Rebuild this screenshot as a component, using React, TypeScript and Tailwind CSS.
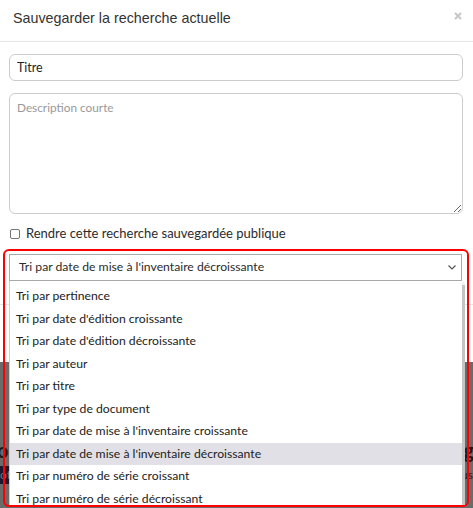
const sortOptions = [
  'Tri par pertinence',
  "Tri par date d'édition croissante",
  "Tri par date d'édition décroissante",
  'Tri par auteur',
  'Tri par titre',
  'Tri par type de document',
  "Tri par date de mise à l'inventaire croissante",
  "Tri par date de mise à l'inventaire décroissante",
  'Tri par numéro de série croissant',
  'Tri par numéro de série décroissant',
  'Tri par cote croissante',
]

const selected = "Tri par date de mise à l'inventaire décroissante"

export default function App() {
  return (
    <div className="relative h-[508px] w-[473px] overflow-hidden bg-[#6b6b6b] font-['Lato',sans-serif] text-[13px] text-[#2b2b2b]">
      {/* Modal */}
      <div className="h-[362px] bg-white">
        <div className="flex h-[42px] items-start justify-between border-b border-[#e5e5e5] pl-[13px] pr-[11px] pt-[8px]">
          <h4 className="font-['Liberation_Sans',Arial,sans-serif] text-[14.3px] leading-[20px] text-[#333]">
            Sauvegarder la recherche actuelle
          </h4>
          <svg width="8" height="8" viewBox="0 0 8 8" className="mt-[4px]">
            <path d="M1 1L7 7M7 1L1 7" stroke="#c6c6c6" strokeWidth="2" />
          </svg>
        </div>

        <div className="flex flex-col pl-[9px] pr-[10px] pt-[12px]">
          <input
            className="h-[27px] rounded-[6px] border border-[#ccc] px-[7px] text-[12.5px] text-[#222] outline-none"
            defaultValue="Titre"
          />
          <textarea
            className="mt-[12px] h-[121px] rounded-[6px] border border-[#ccc] px-[7px] py-[5px] text-[11.8px] text-[#333] outline-none placeholder:text-[#999]"
            placeholder="Description courte"
          />
          <label className="mt-[12px] flex h-[16px] items-center gap-[6px] pl-[1px]">
            <span className="h-[10px] w-[10px] rounded-[2px] border border-[#767676] bg-white" />
            <span className="text-[13px] text-[#2b2b2b]">Rendre cette recherche sauvegardée publique</span>
          </label>
          <div className="mt-[12px] mr-[1px] flex h-[27px] items-center justify-between border border-[#a9a9a9] bg-white pl-[9px] pr-[5px]">
            <span className="text-[12.2px]">{selected}</span>
            <svg width="8" height="5" viewBox="0 0 8 5">
              <path d="M0.5 0.5L4 4L7.5 0.5" stroke="#555" strokeWidth="1.2" fill="none" />
            </svg>
          </div>
        </div>

        {/* footer */}
        <div className="mt-[23px] h-[57px] border-t border-[#e5e5e5]" />
      </div>

      {/* page under overlay */}
      <div className="flex items-start justify-between pt-[78px] text-[20px] font-bold leading-[20px] text-[#1a1a1a]">
        <span className="-ml-[3px]">oc</span>
        <span className="-mr-[1px]">g</span>
      </div>
      <div className="mt-[6px] flex items-center justify-between text-[12px] leading-[18px]">
        <span className="bg-[#1c1830] pr-[1px] text-[#777]">ot</span>
        <span className="text-[#222]">us</span>
      </div>

      {/* focus highlight */}
      <div className="absolute left-[3px] top-[249px] h-[258px] w-[466px] rounded-[6px] border-2 border-[#ff0000]" />

      {/* open dropdown */}
      <div className="absolute left-[9px] top-[281px] h-[224px] w-[456px] overflow-hidden">
        <div className="flex h-full">
          <div className="w-[453px] border-l border-[#cfcfcf] bg-white pt-[4px] shadow-[0_2px_6px_rgba(0,0,0,0.25)]">
            {sortOptions.map((opt) => (
              <div
                key={opt}
                className={`flex h-[22.5px] items-center pl-[6px] text-[12.2px] text-[#222] ${
                  opt === selected ? 'bg-[#e1e0e6]' : ''
                }`}
              >
                {opt}
              </div>
            ))}
          </div>
          <div className="mt-[4px] w-[3px] bg-[#c4c4c4]" />
        </div>
      </div>
    </div>
  )
}
